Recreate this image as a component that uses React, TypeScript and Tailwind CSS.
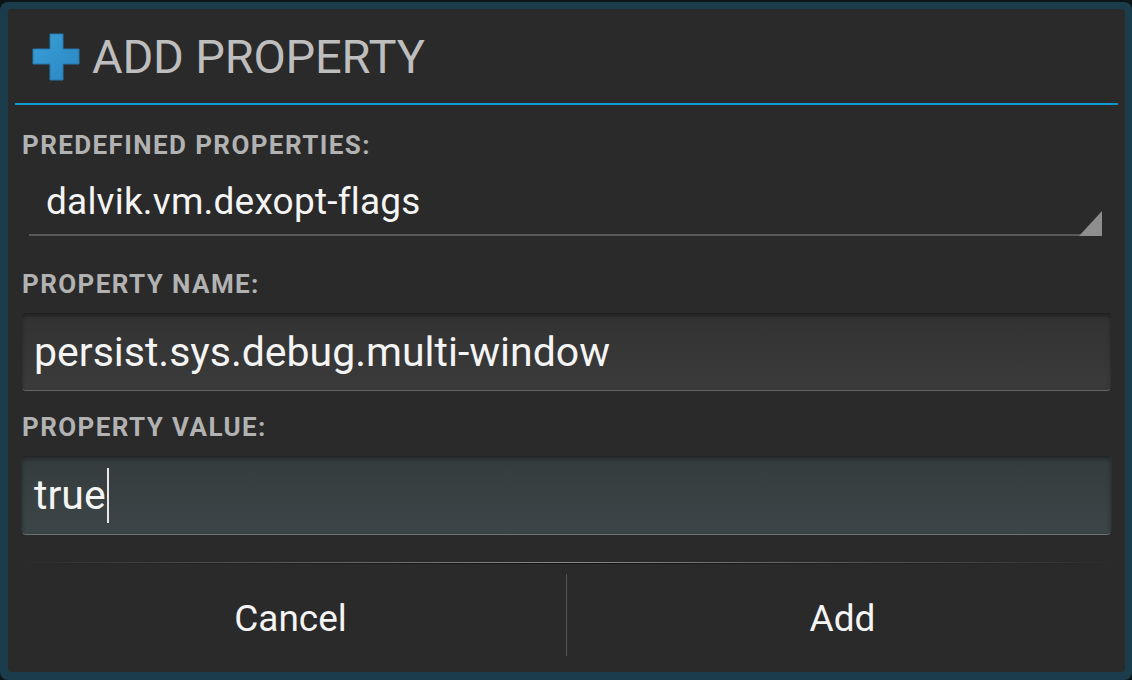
import React from 'react';

const font = { fontFamily: 'Roboto, "Noto Sans", sans-serif' };

const PlusIcon = () => (
    <svg width="48" height="48" viewBox="0 0 48 48">
        <defs>
            <linearGradient id="plusGrad" x1="0" y1="0" x2="1" y2="1">
                <stop offset="0" stopColor="#3aa0d8" />
                <stop offset="1" stopColor="#2a86bf" />
            </linearGradient>
        </defs>
        <path
            d="M18 1 H31 V16 H47 V31 H31 V47 H18 V31 H1 V16 H18 Z"
            fill="url(#plusGrad)"
            stroke="#2479ad"
            strokeWidth="1"
            strokeLinejoin="round"
        />
    </svg>
);

const Label = ({ children }: { children: React.ReactNode }) => (
    <div className="h-[40px] flex items-center pl-[14px] text-[26px] font-bold leading-none text-[#b2b2b2] tracking-[1.4px]">
        {children}
    </div>
);

const Field = ({ value, focused }: { value: string; focused?: boolean }) => (
    <div
        className={
            focused
                ? 'mx-[13px] h-[79px] rounded-[5px] border border-t-[#232626] border-x-[#2c3234] border-b-[#6a7274] bg-gradient-to-b from-[#353c3e] to-[#3c4547] flex items-center pl-[12px] shadow-[inset_0_2px_4px_rgba(0,0,0,0.35)]'
                : 'mx-[13px] h-[78px] rounded-[5px] border border-t-[#1f1f1f] border-x-[#2a2a2a] border-b-[#666] bg-gradient-to-b from-[#323232] to-[#3b3b3b] flex items-center pl-[12px] shadow-[inset_0_2px_4px_rgba(0,0,0,0.35)]'
        }
    >
        <span className="text-[41px] leading-none text-[#f4f4f4]">{value}</span>
        {focused && <span className="ml-[1px] w-[2px] h-[55px] bg-[#e8e8e8]" />}
    </div>
);

const App = () => {
    return (
        <div className="w-[1132px] h-[680px] bg-[#0e1518] pt-[2px]" style={font}>
            <div className="h-[678px] rounded-[8px] bg-[#1b3c4a] pt-[7px] pl-[8px] pr-[7px] pb-[6px]">
                <div className="h-[663px] rounded-[4px] bg-[#2a2a2a] flex flex-col">
                    {/* Title */}
                    <div className="h-[94px] flex items-center pl-[24px] pt-[1px]">
                        <PlusIcon />
                        <h1 className="ml-[12px] text-[47px] leading-none text-[#bebebe] tracking-[-0.2px]">ADD PROPERTY</h1>
                    </div>
                    <div className="mx-[7px] h-[2px] bg-[#0e9ad0]" />

                    <div className="mt-[20px]">
                        <Label>PREDEFINED PROPERTIES:</Label>
                    </div>

                    {/* Spinner */}
                    <div className="mt-[5px] ml-[21px] mr-[23px] h-[66px] border-b-2 border-[#585858] flex items-center pl-[17px] relative">
                        <span className="text-[37px] leading-none text-[#f4f4f4] -mt-[1px] tracking-[0.2px]">dalvik.vm.dexopt-flags</span>
                        <svg className="absolute right-0 bottom-[-2px]" width="23" height="25" viewBox="0 0 23 25">
                            <path d="M23 0 V25 H0 Z" fill="#8e8e8e" />
                        </svg>
                    </div>

                    <div className="mt-[28px]">
                        <Label>PROPERTY NAME:</Label>
                    </div>
                    <div className="mt-[9px]">
                        <Field value="persist.sys.debug.multi-window" />
                    </div>

                    <div className="mt-[16px]">
                        <Label>PROPERTY VALUE:</Label>
                    </div>
                    <div className="mt-[9px]">
                        <Field value="true" focused />
                    </div>

                    {/* Separator */}
                    <div className="mt-[27px] mx-[7px]">
                        <div className="h-[1px] bg-gradient-to-r from-transparent via-[#8c8c8c] to-transparent" />
                        <div className="h-[1px] bg-gradient-to-r from-transparent via-[#111] to-transparent" />
                    </div>

                    {/* Buttons */}
                    <div className="flex-1 flex px-[7px]">
                        <button className="flex-1 flex items-center justify-center text-[37px] leading-none text-[#f4f4f4]">
                            Cancel
                        </button>
                        <div className="w-[1px] mt-[10px] mb-[16px] bg-[#565656]" />
                        <button className="flex-1 flex items-center justify-center text-[37px] leading-none text-[#f4f4f4]">
                            Add
                        </button>
                    </div>
                </div>
            </div>
        </div>
    );
};

export default App;
